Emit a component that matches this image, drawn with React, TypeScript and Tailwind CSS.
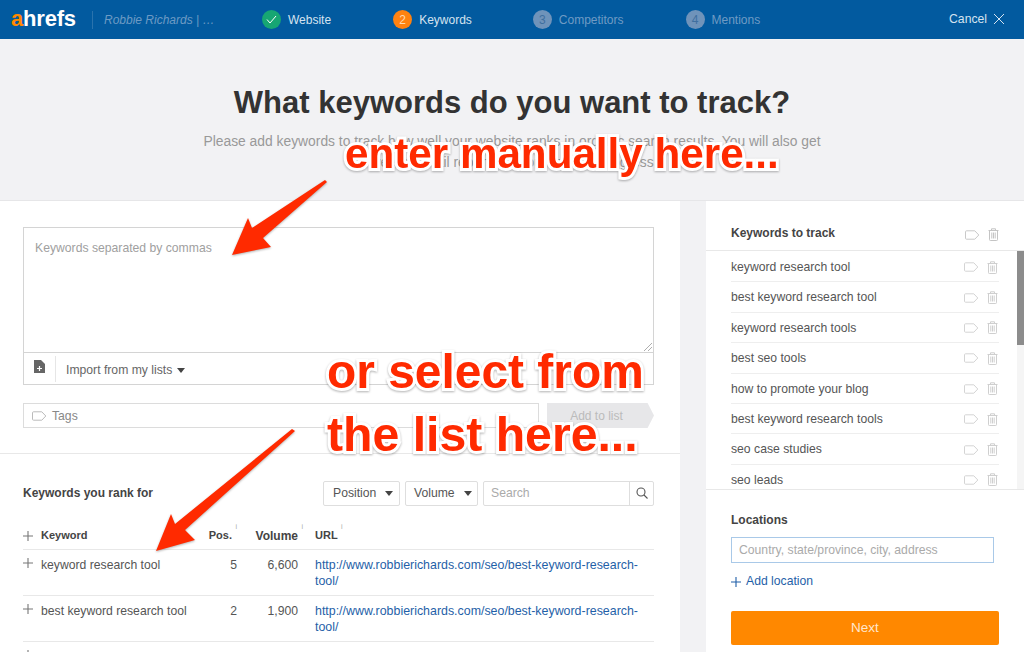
import React from "react";

const Tag = ({ c = "#c9c9c9" }: { c?: string }) => (
  <svg width="15" height="10" viewBox="0 0 15 10" fill="none" stroke={c} strokeWidth="1">
    <path d="M1.5 .8h8.3l4 4.2-4 4.2H1.5a1 1 0 0 1-1-1V1.8a1 1 0 0 1 1-1z" />
  </svg>
);
const Trash = ({ c = "#c4c4c4" }: { c?: string }) => (
  <svg width="11" height="13" viewBox="0 0 11 13" fill="none" stroke={c} strokeWidth="1">
    <path d="M.5 2.5h10M3.5 2.5V.8h4v1.7M1.5 2.5v9.2a.8.8 0 0 0 .8.8h6.4a.8.8 0 0 0 .8-.8V2.5M3.8 4.5v6M5.5 4.5v6M7.2 4.5v6" />
  </svg>
);
const Plus = ({ c = "#777" }: { c?: string }) => (
  <svg width="10" height="10" viewBox="0 0 10 10" stroke={c} strokeWidth="1.1">
    <path d="M5 0v10M0 5h10" />
  </svg>
);
const Caret = () => (
  <svg width="8" height="5" viewBox="0 0 8 5" fill="#444"><path d="M0 0h8L4 5z" /></svg>
);

const Step = ({ n, label, cls, text, ml }: { n: React.ReactNode; label: string; cls: string; text: string; ml: string }) => (
  <div className={`flex items-center ${ml}`}>
    <div className={`w-[19px] h-[19px] rounded-full flex items-center justify-center text-[12px] ${cls}`}>{n}</div>
    <span className={`ml-[7px] text-[12px] ${text}`}>{label}</span>
  </div>
);

const tracked = [
  "keyword research tool",
  "best keyword research tool",
  "keyword research tools",
  "best seo tools",
  "how to promote your blog",
  "best keyword research tools",
  "seo case studies",
  "seo leads",
];

const ranks = [
  { k: "keyword research tool", p: "5", v: "6,600" },
  { k: "best keyword research tool", p: "2", v: "1,900" },
];

const note =
  "absolute whitespace-nowrap font-bold text-[#ff2a00] [-webkit-text-stroke:6px_white] [paint-order:stroke_fill] [filter:drop-shadow(0_1px_1px_rgba(0,0,0,0.3))]";

export default function App() {
  return (
    <div className="relative h-[652px] w-[1024px] overflow-hidden bg-[#f2f2f4] font-['Liberation_Sans',Arial,sans-serif] text-[12.2px] text-[#555]">
      <header className="h-[39px] bg-[#025a9f] flex items-center">
        <div className="ml-[11px] w-[81px] text-[22px] font-bold leading-none text-white tracking-[-0.2px] -mt-[2px]">
          <span className="text-[#ff8800]">a</span>hrefs
        </div>
        <div className="w-px h-[18px] bg-[#2a73ad]" />
        <span className="ml-[11px] w-[124px] text-[12px] italic text-[#6d9ac4]">Robbie Richards | …</span>
        <Step ml="ml-[34px]" n={<svg width="11" height="9" viewBox="0 0 11 9" fill="none" stroke="#fff" strokeWidth="1"><path d="M1 4.5 4 8l6-7" /></svg>} label="Website" cls="bg-[#17a673]" text="text-[#d5e3f0]" />
        <Step ml="ml-[62px]" n="2" label="Keywords" cls="bg-[#ff8210] text-[#ffd9b0]" text="text-[#d5e3f0]" />
        <Step ml="ml-[61px]" n="3" label="Competitors" cls="bg-[#6f93ba] text-[#3f6f9f]" text="text-[#6f9ac4]" />
        <Step ml="ml-[62px]" n="4" label="Mentions" cls="bg-[#6f93ba] text-[#3f6f9f]" text="text-[#6f9ac4]" />
        <div className="ml-auto mr-[20px] flex items-center gap-[7px] text-[12.2px] text-[#d5e3f0]">
          Cancel
          <svg width="10" height="10" viewBox="0 0 10 10" stroke="#d5e3f0" strokeWidth="1"><path d="M0 0l10 10M10 0L0 10" /></svg>
        </div>
      </header>

      <section className="h-[162px] border-b border-[#e6e6e8] text-center">
        <h1 className="pt-[46px] text-[31px] leading-[36px] font-bold text-[#333]">What keywords do you want to track?</h1>
        <p className="mt-[10px] text-[13.85px] leading-[21px] text-[#999]">
          Please add keywords to track how well your website ranks in organic search results. You will also get
          <br />
          weekly email reports on your ranking progress
        </p>
      </section>

      <main className="flex items-start">
        <div className="w-[680px] h-[451px] bg-white shrink-0">
          <div className="h-[253px] border-b border-[#e8e8e8] px-[23px] pt-[26px]">
            <div className="w-[631px] border border-[#d4d4d4]">
              <div className="relative h-[125px] border-b border-[#d4d4d4] pt-[11px] pl-[11px] text-[#a0a0a0]">
                Keywords separated by commas
                <svg className="absolute right-[1px] bottom-[1px]" width="8" height="8" viewBox="0 0 8 8" stroke="#999" strokeWidth=".8"><path d="M0 8l8-8M4 8l4-4" /></svg>
              </div>
              <div className="h-[31px] flex items-center">
                <div className="w-[32px] h-[26px] flex items-center justify-center border-r border-[#e6e6e6] pb-[4px]">
                  <svg width="11" height="13" viewBox="0 0 11 13"><path fill="#666" d="M0 0h7l4 4v9H0z" /><path stroke="#fff" strokeWidth="1.2" d="M5.5 6v5M3 8.5h5" /></svg>
                </div>
                <span className="ml-[10px] pt-[4px] text-[#666] mr-[5px]">Import from my lists</span>
                <div className="pt-[3px]"><Caret /></div>
              </div>
            </div>
            <div className="flex mt-[18px]">
              <div className="w-[516px] h-[25px] border border-[#dcdcdc] flex items-center pl-[8px] gap-[5px] pt-[1px] text-[#888]">
                <Tag c="#bbb" /> Tags
              </div>
              <div className="ml-[8px] w-[107px] h-[25px] bg-[#e7e7e9] flex items-center justify-center pr-[8px] text-[#bbb] text-[12px] [clip-path:polygon(0_0,94%_0,100%_50%,94%_100%,0_100%)]">
                Add to list
              </div>
            </div>
          </div>

          <div className="pl-[23px] w-[654px]">
            <div className="flex items-center mt-[26px] h-[26px]">
              <span className="font-bold text-[#444] text-[12px]">Keywords you rank for</span>
              <div className="ml-auto flex items-center text-[#555]">
                <div className="w-[77px] h-[25px] border border-[#dedede] rounded-[2px] flex items-center pl-[9px] gap-[9px]">Position <Caret /></div>
                <div className="ml-[5px] w-[73px] h-[25px] border border-[#dedede] rounded-[2px] flex items-center pl-[8px] gap-[9px]">Volume <Caret /></div>
                <div className="ml-[5px] w-[171px] h-[25px] border border-[#dedede] rounded-[2px] flex items-center">
                  <span className="flex-1 pl-[7px] text-[#aaa]">Search</span>
                  <div className="w-[24px] h-full border-l border-[#dedede] flex items-center justify-center">
                    <svg width="12" height="12" viewBox="0 0 12 12" fill="none" stroke="#555" strokeWidth="1.1"><circle cx="5" cy="5" r="4" /><path d="M8 8l3.5 3.5" /></svg>
                  </div>
                </div>
              </div>
            </div>
            <div className="flex items-center h-[30px] mt-[14px] pt-[2px] border-b border-[#e8e8e8] text-[11px] font-bold text-[#444]">
              <div className="w-[18px]"><Plus /></div>
              <div className="w-[154px]">Keyword</div>
              <div className="w-[37px] text-right relative">Pos.<sup className="absolute -right-[5px] top-0 text-[7px] font-normal text-[#aaa]">i</sup></div>
              <div className="w-[66px] text-right relative mr-[17px] text-[12px]">Volume<sup className="absolute -right-[5px] top-0 text-[7px] font-normal text-[#aaa]">i</sup></div>
              <div className="relative">URL<sup className="absolute -right-[5px] top-0 text-[7px] font-normal text-[#aaa]">i</sup></div>
            </div>
            {ranks.map((r) => (
              <div key={r.k} className="flex h-[46px] border-b border-[#e8e8e8] pt-[8px] leading-[15.5px] text-[#555]">
                <div className="w-[18px]"><Plus /></div>
                <div className="w-[154px]">{r.k}</div>
                <div className="w-[42px] text-right">{r.p}</div>
                <div className="w-[61px] text-right mr-[17px]">{r.v}</div>
                <div className="w-[328px] text-[12.4px] text-[#1f5fa8]">http://www.robbierichards.com/seo/best-keyword-research-tool/</div>
              </div>
            ))}
            <div className="pt-[8px]"><Plus /></div>
          </div>
        </div>

        <aside className="ml-[26px] w-[318px] h-[451px] bg-white shrink-0">
          <div className="h-[50px] border-b border-[#e8e8e8] pl-[25px] pr-[25px] flex items-center justify-between pt-[15px]">
            <span className="font-bold text-[#444] text-[12px]">Keywords to track</span>
            <div className="flex items-center gap-[8px] pt-[3px]"><Tag /><Trash /></div>
          </div>
          <div className="relative h-[238px] overflow-hidden pl-[25px] pr-[25px] pt-[1px]">
            <div className="absolute right-0 top-0 w-[7px] h-full bg-[#f5f5f5]">
              <div className="w-full h-[94px] bg-[#8c8c8c]" />
            </div>
            {tracked.map((t) => (
              <div key={t} className="h-[30.4px] shrink-0 pt-[1px] border-b border-[#eeeeee] flex items-center justify-between text-[#555]">
                {t}
                <div className="flex items-center gap-[8px] pr-[1px]"><Tag c="#d4d4d4" /><Trash c="#cfcfcf" /></div>
              </div>
            ))}
          </div>
          <div className="border-t border-[#e8e8e8] pl-[25px] pr-[25px] pt-[23px]">
            <div className="font-bold text-[#444] text-[12px] leading-[14px]">Locations</div>
            <div className="mt-[10px] w-[263px] h-[26px] border border-[#a9c9e8] flex items-center pl-[7px] text-[#aaa]">Country, state/province, city, address</div>
            <div className="mt-[11px] flex items-center gap-[5px] text-[#1f5fa8] leading-[15px]"><Plus c="#1f5fa8" /> Add location</div>
            <div className="mt-[22px] h-[34px] rounded-[2px] bg-[#ff8800] flex items-center justify-center text-[13.5px] text-[#ffe6cc]">Next</div>
          </div>
        </aside>
      </main>

      <svg className="absolute left-0 top-0 pointer-events-none" width="1024" height="652" viewBox="0 0 1024 652">
        <g fill="#ff2a00" style={{ filter: "drop-shadow(0 1px 1px rgba(0,0,0,.3))" }}>
          <polygon points="232,255 248,218 252,228 325,180 327,182 263,238 271,247" />
          <polygon points="156,551 171,514 175,524 292,429 295,431 185,530 195,540" />
        </g>
      </svg>
      <div className={`${note} left-[345px] top-[128px] text-[42.2px] leading-[52px]`}>enter manually here...</div>
      <div className={`${note} left-[327px] top-[346px] text-[47.9px] leading-[52px]`}>or select from</div>
      <div className={`${note} left-[327px] top-[408px] text-[48.2px] leading-[52px]`}>the list here...</div>
    </div>
  );
}
